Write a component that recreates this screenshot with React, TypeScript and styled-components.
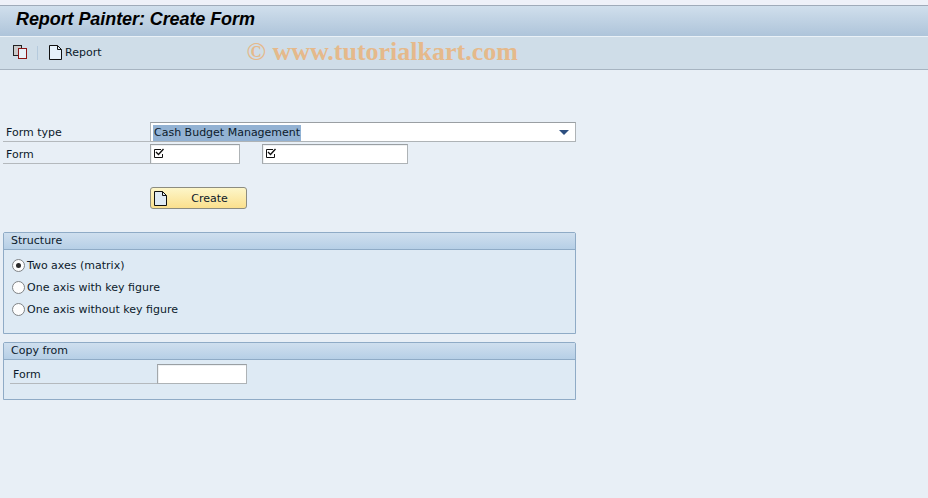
import styled, { createGlobalStyle } from "styled-components"

const GlobalStyle = createGlobalStyle`
    html, body {
        margin: 0;
        padding: 0;
        background: #e8eff6;
    }
    body {
        font-family: "DejaVu Sans", "Noto Sans", sans-serif;
        font-size: 11px;
        color: #0c1a2b;
    }
`

const Page = styled.div`
    width: 928px;
    height: 498px;
    overflow: hidden;
    background: #e8eff6;
    display: flex;
    flex-direction: column;
`

const TopStrip = styled.div`
    height: 5px;
    background: #eef1f8;
    border-bottom: 1px solid #9fabb9;
`

const TitleBar = styled.div`
    box-sizing: border-box;
    height: 31px;
    padding: 0 0 3px 16px;
    display: flex;
    align-items: center;
    background: linear-gradient(#d0dfec, #aec4da);
    border-bottom: 1px solid #eaf1f7;
`

const Title = styled.h1`
    margin: 0;
    font-family: "Liberation Sans", Arial, sans-serif;
    font-size: 18px;
    font-weight: bold;
    font-style: italic;
    letter-spacing: -0.08px;
    color: #000;
    white-space: nowrap;
`

const Toolbar = styled.div`
    height: 32px;
    padding-left: 13px;
    display: flex;
    align-items: center;
    background: #cfdde8;
    border-bottom: 1px solid #a7b4c1;
    svg {
        margin-bottom: 2px;
    }
`

const ToolSeparator = styled.div`
    width: 1px;
    height: 14px;
    margin: 0 11px 0 10px;
    background: #b5cadd;
`

const ToolLabel = styled.span`
    margin-left: 3px;
    line-height: 16px;
`

const Watermark = styled.span`
    position: relative;
    top: -1px;
    margin-left: 145px;
    font-family: "Liberation Serif", "Times New Roman", serif;
    font-size: 26px;
    font-weight: bold;
    color: #e5b98b;
    white-space: nowrap;
`

const Content = styled.main`
    padding: 52px 0 0 3px;
    display: flex;
    flex-direction: column;
`

const FieldRow = styled.div`
    display: flex;
    align-items: flex-start;
    height: 22px;
`

const Label = styled.label<{ $width: number; $indent: number }>`
    box-sizing: border-box;
    width: ${p => p.$width}px;
    height: 20px;
    padding-left: ${p => p.$indent}px;
    display: flex;
    align-items: flex-end;
    line-height: 17px;
    border-bottom: 1px solid #b4b9bd;
`

const Input = styled.div<{ $width: number; $gap?: number }>`
    box-sizing: border-box;
    width: ${p => p.$width}px;
    height: 20px;
    margin-left: ${p => p.$gap ?? 0}px;
    padding: 3px 0 0 2px;
    background: #fff;
    border: 1px solid #aeb3b6;
    border-top-color: #9a9fa3;
    border-left-color: #a3a8ab;
    box-shadow: inset 1px 1px 0 #eef1f3;
`

const Select = styled.div`
    box-sizing: border-box;
    width: 426px;
    height: 20px;
    padding: 1px 6px 0 2px;
    display: flex;
    align-items: center;
    justify-content: space-between;
    background: #fff;
    border: 1px solid #aeb3b6;
    border-top-color: #9a9fa3;
`

const SelectedText = styled.span`
    padding: 0 1px;
    line-height: 16px;
    background: #93b2d3;
`

const Arrow = styled.span`
    width: 0;
    height: 0;
    border-left: 5px solid transparent;
    border-right: 5px solid transparent;
    border-top: 5px solid #2d4f80;
`

const ButtonRow = styled.div`
    margin: 21px 0 23px 147px;
`

const Button = styled.button`
    box-sizing: border-box;
    width: 97px;
    height: 22px;
    padding: 0 0 0 3px;
    display: flex;
    align-items: center;
    font: inherit;
    color: inherit;
    background: linear-gradient(#fdf6c9, #fbe08d);
    border: 1px solid #8c8c80;
    border-radius: 3px;
`

const ButtonText = styled.span`
    flex: 1;
    padding-left: 6px;
    text-align: center;
`

const Group = styled.section<{ $height: number }>`
    box-sizing: border-box;
    width: 573px;
    height: ${p => p.$height}px;
    margin-bottom: 8px;
    background: #deeaf4;
    border: 1px solid #8fabc6;
    border-radius: 2px 2px 0 0;
`

const GroupHeader = styled.h2`
    box-sizing: border-box;
    height: 17px;
    margin: 0;
    padding-left: 7px;
    font-size: 11px;
    font-weight: normal;
    line-height: 15px;
    background: linear-gradient(#cfdfee, #b6cfe6);
    border-bottom: 1px solid #8fabc6;
`

const RadioList = styled.div`
    padding: 4px 0 0 8px;
    display: flex;
    flex-direction: column;
`

const RadioRow = styled.div`
    height: 22px;
    display: flex;
    align-items: center;
    gap: 2px;
`

const Radio = styled.span<{ $checked?: boolean }>`
    box-sizing: border-box;
    width: 13px;
    height: 13px;
    display: flex;
    align-items: center;
    justify-content: center;
    background: #fdfdfd;
    border: 1px solid #7f8386;
    border-radius: 50%;
    &::after {
        content: "";
        width: 5px;
        height: 5px;
        border-radius: 50%;
        background: ${p => (p.$checked ? "#2b2b2b" : "transparent")};
    }
`

const CopyRow = styled.div`
    padding: 4px 0 0 6px;
    display: flex;
`

const CheckIcon = () => (
    <svg width="12" height="11" viewBox="0 0 12 11" fill="none">
        <path d="M9.5 6V9.5H1.5V1.5H8" stroke="#111" strokeWidth="1" />
        <path d="M3 4L5.5 6.5L10.5 1" stroke="#111" strokeWidth="1.4" />
    </svg>
)

const DocIcon = ({ fill }: { fill: string }) => (
    <svg width="13" height="15" viewBox="0 0 13 15" fill="none">
        <path d="M.5.5H8.5L12.5 4.5V14.5H.5Z" fill={fill} stroke="#111" />
        <path d="M8.5.5V4.5H12.5" stroke="#111" />
    </svg>
)

const CopyIcon = () => (
    <svg width="14" height="14" viewBox="0 0 14 14" fill="none">
        <rect x=".5" y=".5" width="8" height="10" fill="#c9c9c9" stroke="#222" />
        <rect x="5.5" y="3.5" width="8" height="10" fill="#e7f0f8" stroke="#8c1414" />
    </svg>
)

export default function App () {
    return (
        <Page>
            <GlobalStyle />
            <TopStrip />
            <TitleBar>
                <Title>Report Painter: Create Form</Title>
            </TitleBar>
            <Toolbar>
                <CopyIcon />
                <ToolSeparator />
                <DocIcon fill="#e6f1fa" />
                <ToolLabel>Report</ToolLabel>
                <Watermark>© www.tutorialkart.com</Watermark>
            </Toolbar>
            <Content>
                <FieldRow>
                    <Label $width={147} $indent={3}>Form type</Label>
                    <Select>
                        <SelectedText>Cash Budget Management</SelectedText>
                        <Arrow />
                    </Select>
                </FieldRow>
                <FieldRow>
                    <Label $width={147} $indent={3}>Form</Label>
                    <Input $width={90}><CheckIcon /></Input>
                    <Input $width={146} $gap={22}><CheckIcon /></Input>
                </FieldRow>
                <ButtonRow>
                    <Button>
                        <DocIcon fill="#dfeaf5" />
                        <ButtonText>Create</ButtonText>
                    </Button>
                </ButtonRow>
                <Group $height={102}>
                    <GroupHeader>Structure</GroupHeader>
                    <RadioList>
                        <RadioRow><Radio $checked />Two axes (matrix)</RadioRow>
                        <RadioRow><Radio />One axis with key figure</RadioRow>
                        <RadioRow><Radio />One axis without key figure</RadioRow>
                    </RadioList>
                </Group>
                <Group $height={58}>
                    <GroupHeader>Copy from</GroupHeader>
                    <CopyRow>
                        <Label $width={147} $indent={3}>Form</Label>
                        <Input $width={90} />
                    </CopyRow>
                </Group>
            </Content>
        </Page>
    )
}
